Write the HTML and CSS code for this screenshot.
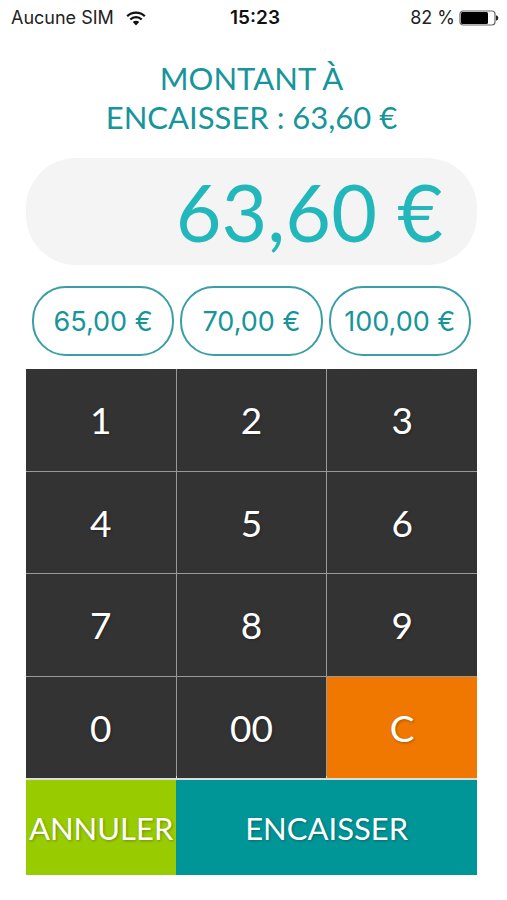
FILE: index.html
```html
<!DOCTYPE html>
<html lang="fr">
<head>
<meta charset="utf-8">
<meta name="viewport" content="width=device-width, initial-scale=1">
<title>Encaissement</title>
<link rel="stylesheet" href="styles.css">
</head>
<body>
<header class="status">
  <div class="status-left">
    <span>Aucune SIM</span>
    <svg class="wifi" viewBox="0 0 20 15" aria-hidden="true">
      <path d="M1.2 5.2a12.5 12.5 0 0 1 17.6 0M4.3 8.5a8.1 8.1 0 0 1 11.4 0" fill="none" stroke="#111" stroke-width="2.3"/>
      <path d="M6.8 11.1a4.6 4.6 0 0 1 6.4 0L10 14.4z" fill="#111"/>
    </svg>
  </div>
  <time class="status-time">15:23</time>
  <div class="status-right">
    <span>82 %</span>
    <svg class="battery" viewBox="0 0 40 16" aria-hidden="true">
      <rect x="1" y="1" width="35" height="14" rx="3" fill="#fff" stroke="#666" stroke-width="1.2"/>
      <rect x="2" y="2" width="27" height="12" rx="1.5" fill="#000"/>
      <path d="M37 5.2q2.400 .8 2.400 2.800t-2.400 2.800z" fill="#222"/>
    </svg>
  </div>
</header>
<main class="checkout">
  <h1 class="title"><label for="amount">Montant à<br>encaisser : 63,60 €</label></h1>
  <input class="amount" id="amount" type="text" value="63,60 €" readonly>
  <div class="presets">
    <button class="preset" type="button">65,00 €</button>
    <button class="preset" type="button">70,00 €</button>
    <button class="preset" type="button">100,00 €</button>
  </div>
  <div class="keypad">
    <button class="key" type="button">1</button>
    <button class="key" type="button">2</button>
    <button class="key" type="button">3</button>
    <button class="key" type="button">4</button>
    <button class="key" type="button">5</button>
    <button class="key" type="button">6</button>
    <button class="key" type="button">7</button>
    <button class="key" type="button">8</button>
    <button class="key" type="button">9</button>
    <button class="key" type="button">0</button>
    <button class="key" type="button">00</button>
    <button class="key key-clear" type="button">C</button>
  </div>
  <div class="actions">
    <button class="action cancel" type="button">ANNULER</button>
    <button class="action confirm" type="button">ENCAISSER</button>
  </div>
</main>
</body>
</html>
```
FILE: styles.css
```css
* {
  box-sizing: border-box;
}

body {
  margin: 0;
  background: #fff;
  font-family: Lato, "Liberation Sans", sans-serif;
}

button {
  margin: 0;
  padding: 0;
  border: 0;
  font-family: inherit;
  cursor: pointer;
}

.status {
  display: grid;
  grid-template-columns: 1fr auto 1fr;
  align-items: center;
  height: 36px;
  padding: 0 8px 0 11px;
  color: #222;
  font: 18px/36px Inter, "Liberation Sans", sans-serif;
}

.status-left,
.status-right {
  display: flex;
  align-items: center;
}

.status-left {
  gap: 12px;
}

.status-right {
  justify-content: flex-end;
  gap: 4px;
}

.status-time {
  color: #111;
  font-size: 19px;
  font-weight: 600;
}

.wifi {
  width: 20px;
  height: 15px;
}

.battery {
  width: 40px;
  height: 16px;
}

.checkout {
  padding: 23px 30px 24px 26px;
}

.title {
  margin: 0 0 21px;
  color: #16959a;
  font-size: 31px;
  font-weight: 400;
  line-height: 39px;
  text-align: center;
  text-transform: uppercase;
}

.amount {
  display: block;
  width: 100%;
  height: 107px;
  padding: 0 34px;
  border: 0;
  border-radius: 50px;
  outline: 0;
  background: #f4f4f4;
  color: #22b7ba;
  font-family: inherit;
  font-size: 79px;
  font-weight: 400;
  text-align: right;
}

.presets {
  display: grid;
  grid-template-columns: repeat(3, 1fr);
  gap: 6px;
  padding: 21px 6px 13px;
}

.preset {
  height: 70px;
  border: 2px solid #3a9fa4;
  border-radius: 34px;
  background: #fff;
  color: #16959a;
  font: 27px Inter, "Liberation Sans", sans-serif;
  white-space: nowrap;
}

.keypad {
  display: grid;
  grid-template-columns: repeat(3, 1fr);
  grid-template-rows: repeat(4, 1fr);
  gap: 1px;
  min-height: 411px;
  padding-bottom: 2px;
  background: linear-gradient(#999 99%, #ddd 99%);
}

.key,
.action {
  color: #fff;
  text-shadow: 1px 1px 3px rgba(0, 0, 0, 0.3);
}

.key {
  background: #333;
  font-size: 37px;
}

.key-clear {
  background: #f07800;
}

.actions {
  display: grid;
  grid-template-columns: 1fr 2fr;
}

.action {
  min-width: 0;
  height: 95px;
  font-size: 31px;
  white-space: nowrap;
}

.cancel {
  background: #9c0;
}

.confirm {
  background: #009698;
}
```
